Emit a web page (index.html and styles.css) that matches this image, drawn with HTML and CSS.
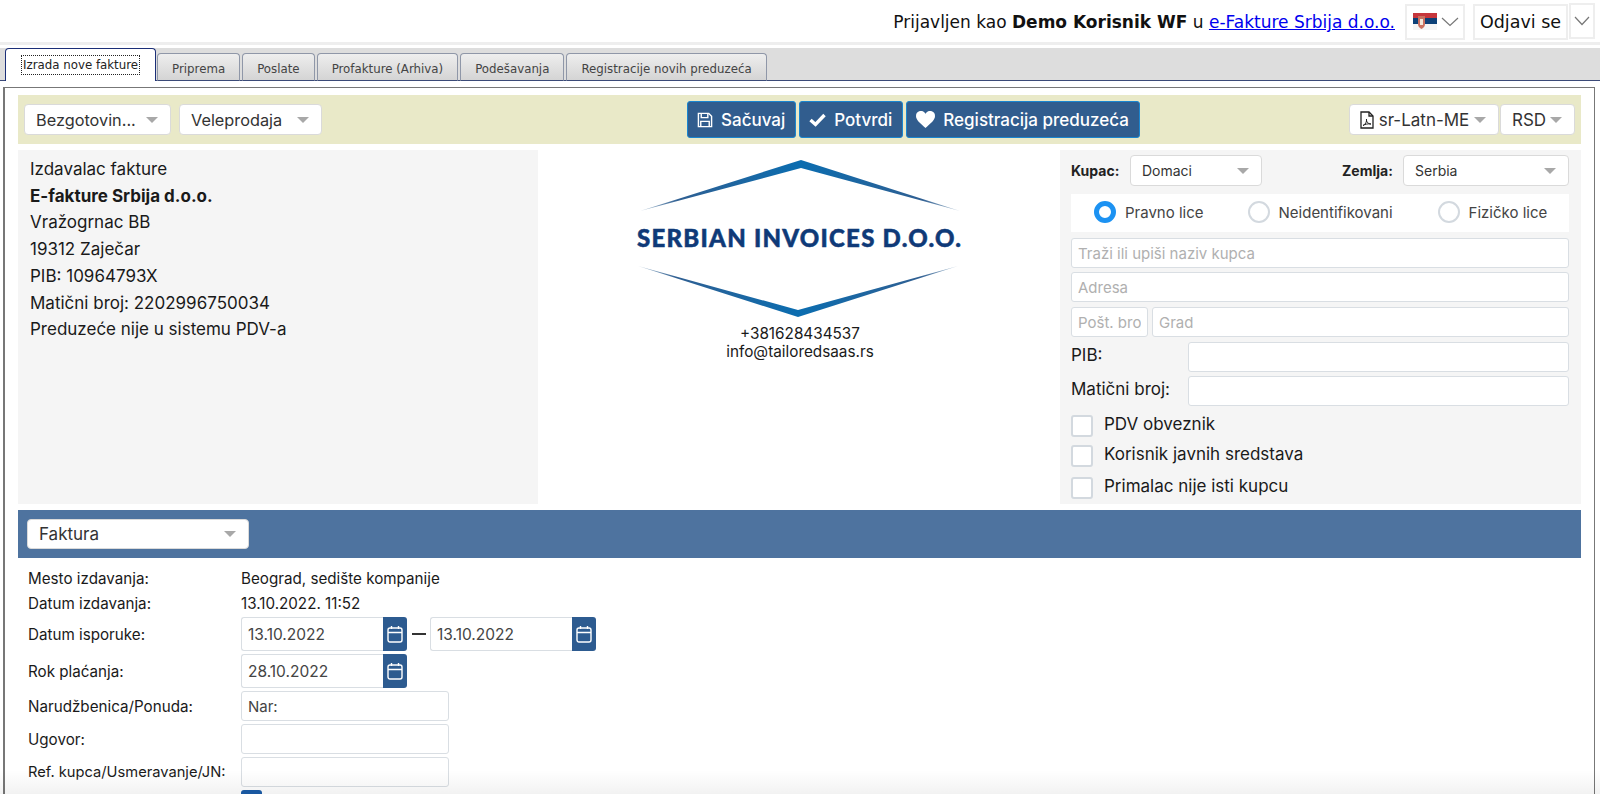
FILE: index.html
```html
<!DOCTYPE html>
<html lang="sr">
<head>
    <meta charset="UTF-8">
    <link rel="stylesheet" href="styles.css">
    <title>Izrada nove fakture</title>
</head>
<body>
    <header class="topbar">
        <span class="login">Prijavljen kao <b>Demo Korisnik WF</b> u <a href="#">e-Fakture Srbija d.o.o.</a></span>
        <div class="flagbox">
            <svg width="24" height="18" viewBox="0 0 24 18">
                <rect y="0" width="24" height="5" fill="#c6363c"/>
                <rect y="5" width="24" height="6" fill="#0c4077"/>
                <rect y="11" width="24" height="6" fill="#f4f4f4"/>
                <path d="M5 3h7v8c0 3-2 4-3.500 5C7 15 5 14 5 11z" fill="#c9705f"/>
                <path d="M7 6h3v6H7z" fill="#f2e6d8"/>
            </svg>
            <svg class="chev" width="18" height="10" viewBox="0 0 18 10"><path d="M1 1l8 7.500L17 1" fill="none" stroke="#777" stroke-width="1.200"/></svg>
        </div>
        <div class="logout">Odjavi se</div>
        <div class="logoutarrow">
            <svg width="16" height="10" viewBox="0 0 16 10"><path d="M1 1l7 7.500L15 1" fill="none" stroke="#777" stroke-width="1.200"/></svg>
        </div>
    </header>

    <nav class="tabs">
        <a class="tab active"><span>Izrada nove fakture</span></a>
        <a class="tab">Priprema</a>
        <a class="tab">Poslate</a>
        <a class="tab">Profakture (Arhiva)</a>
        <a class="tab">Podešavanja</a>
        <a class="tab">Registracije novih preduzeća</a>
    </nav>

    <main class="panel">
        <div class="toolbar">
            <div class="toolgroup">
                <div class="sel sel-pay">Bezgotovin...<i class="caret"></i></div>
                <div class="sel sel-sale">Veleprodaja<i class="caret"></i></div>
            </div>
            <div class="toolgroup actions">
                <button class="btn">
                    <svg width="16" height="16" viewBox="0 0 17 17" fill="none" stroke="#fff" stroke-width="1.500"><path d="M1.500 1.500h11l3 3v11h-14z"/><path d="M4.500 1.500v4.500h7V1.500"/><path d="M4 15.500v-5.500h9v5.500"/></svg>
                    Sačuvaj
                </button>
                <button class="btn">
                    <svg width="17" height="14" viewBox="0 0 17 14" fill="none" stroke="#fff" stroke-width="3.400"><path d="M1.500 7l5 4.500L15.500 2"/></svg>
                    Potvrdi
                </button>
                <button class="btn">
                    <svg width="19" height="17" viewBox="0 0 19 17" fill="#fff"><path d="M9.500 17C4 12 0 9 0 5a5 5 0 0 1 9.500-2.200A5 5 0 0 1 19 5c0 4-4 7-9.500 12z"/></svg>
                    Registracija preduzeća
                </button>
            </div>
            <div class="toolgroup right">
                <div class="sel sel-lang">
                    <svg width="14" height="18" viewBox="0 0 14 18" fill="none" stroke="#222" stroke-width="1.300"><path d="M1 1h8l4 4v12H1z"/><path d="M9 1v4h4"/><path d="M3 14.500c2.500-1 4-4 3.500-6.500-.5 3 2 5 4.500 5-3-.5-6 .2-8 1.500z" stroke-width="1"/></svg>
                    sr-Latn-ME<i class="caret"></i>
                </div>
                <div class="sel sel-cur">RSD<i class="caret"></i></div>
            </div>
        </div>

        <section class="info">
            <div class="issuer">
                <div>Izdavalac fakture</div>
                <div><b>E-fakture Srbija d.o.o.</b></div>
                <div>Vražogrnac BB</div>
                <div>19312 Zaječar</div>
                <div>PIB: 10964793X</div>
                <div>Matični broj: 2202996750034</div>
                <div>Preduzeće nije u sistemu PDV-a</div>
            </div>

            <div class="logo">
                <svg width="330" height="160" viewBox="0 0 330 160">
                    <defs>
                        <linearGradient id="lg1" x1="0" x2="1" y1="0" y2="0">
                            <stop offset="0" stop-color="#b8cad9"/>
                            <stop offset="0.120" stop-color="#2f5f92"/>
                            <stop offset="0.500" stop-color="#0b6db0"/>
                            <stop offset="0.880" stop-color="#2f5f92"/>
                            <stop offset="1" stop-color="#b8cad9"/>
                        </linearGradient>
                    </defs>
                    <polygon points="5,51 166,0 325,51 166,8" fill="url(#lg1)"/>
                    <polygon points="3,106 163,150 323,106 163,157" fill="url(#lg1)"/>
                    <text class="logotext" x="2" y="87" textLength="324" lengthAdjust="spacing">SERBIAN INVOICES D.O.O.</text>
                </svg>
                <div class="contact">+381628434537<br>info@tailoredsaas.rs</div>
            </div>

            <div class="buyer">
                <div class="buyer-top">
                    <label>Kupac:</label>
                    <div class="sel sel-small sel-kupac">Domaci<i class="caret"></i></div>
                    <label class="zemlja">Zemlja:</label>
                    <div class="sel sel-small sel-zemlja">Serbia<i class="caret"></i></div>
                </div>
                <div class="radios">
                    <span class="radio on"></span><span class="radio-lbl lbl1">Pravno lice</span>
                    <span class="radio"></span><span class="radio-lbl lbl2">Neidentifikovani</span>
                    <span class="radio"></span><span class="radio-lbl">Fizičko lice</span>
                </div>
                <input class="inp inp-first" placeholder="Traži ili upiši naziv kupca">
                <input class="inp" placeholder="Adresa">
                <div class="cityrow">
                    <input class="inp" placeholder="Pošt. broj">
                    <input class="inp" placeholder="Grad">
                </div>
                <div class="idrow"><label>PIB:</label><input class="inp"></div>
                <div class="idrow"><label>Matični broj:</label><input class="inp"></div>
                <div class="check check1"><span class="box"></span><span class="check-lbl">PDV obveznik</span></div>
                <div class="check check2"><span class="box"></span><span class="check-lbl">Korisnik javnih sredstava</span></div>
                <div class="check check3"><span class="box"></span><span class="check-lbl">Primalac nije isti kupcu</span></div>
            </div>
        </section>

        <div class="bluebar">
            <div class="sel sel-doc">Faktura<i class="caret"></i></div>
        </div>

        <section class="form">
            <div class="row row-text1"><label>Mesto izdavanja:</label><span>Beograd, sedište kompanije</span></div>
            <div class="row row-text2"><label>Datum izdavanja:</label><span>13.10.2022. 11:52</span></div>
            <div class="row">
                <label>Datum isporuke:</label>
                <div class="date"><input class="dateinp" value="13.10.2022"><span class="calbtn"><svg class="cal" width="16" height="18" viewBox="0 0 16 18" fill="none" stroke="#fff" stroke-width="1.400"><rect x="1" y="3" width="14" height="14" rx="2"/><path d="M1 7.500h14M4.500 1v3M11.500 1v3"/></svg></span></div>
                <span class="dash"></span>
                <div class="date"><input class="dateinp" value="13.10.2022"><span class="calbtn"><svg class="cal" width="16" height="18" viewBox="0 0 16 18" fill="none" stroke="#fff" stroke-width="1.400"><rect x="1" y="3" width="14" height="14" rx="2"/><path d="M1 7.500h14M4.500 1v3M11.500 1v3"/></svg></span></div>
            </div>
            <div class="row">
                <label>Rok plaćanja:</label>
                <div class="date"><input class="dateinp" value="28.10.2022"><span class="calbtn"><svg class="cal" width="16" height="18" viewBox="0 0 16 18" fill="none" stroke="#fff" stroke-width="1.400"><rect x="1" y="3" width="14" height="14" rx="2"/><path d="M1 7.500h14M4.500 1v3M11.500 1v3"/></svg></span></div>
            </div>
            <div class="row"><label>Narudžbenica/Ponuda:</label><input class="inp forminp" value="Nar:"></div>
            <div class="row"><label>Ugovor:</label><input class="inp forminp"></div>
            <div class="row"><label class="lbl-ref">Ref. kupca/Usmeravanje/JN:</label><input class="inp forminp"></div>
            <div class="row"><label></label><span class="checked"></span></div>
        </section>
    </main>
    <div class="fade"></div>
</body>
</html>
```

FILE: styles.css
```css
*{
    box-sizing: border-box;
}
html, body{
    margin: 0;
    height: 794px;
    overflow: hidden;
    background-color: white;
    color: #222;
    font-family: Inter, "Liberation Sans", sans-serif;
}

/* top line */
.topbar{
    height: 45px;
    padding-right: 5px;
    display: flex;
    justify-content: flex-end;
    align-items: flex-start;
    border-bottom: 3px solid #eeeeee;
    font-family: "DejaVu Sans", sans-serif;
    font-size: 17px;
    color: #111;
}
.login{
    margin-top: 12px;
    margin-right: 10px;
}
.login a{
    color: #0000ee;
}
.flagbox{
    width: 60px;
    height: 36px;
    margin-top: 4px;
    margin-right: 8px;
    border: 2px solid #eeeeee;
    display: flex;
    align-items: center;
    padding-left: 6px;
    gap: 4px;
}
.logout{
    width: 95px;
    height: 36px;
    margin-top: 4px;
    border: 2px solid #eeeeee;
    text-align: center;
    font-size: 17.500px;
    line-height: 32px;
}
.logoutarrow{
    width: 26px;
    height: 36px;
    margin-top: 3px;
    margin-left: 1px;
    border: 2px solid #eeeeee;
    display: flex;
    align-items: center;
    justify-content: center;
}

/* tabs */
.tabs{
    height: 33px;
    margin-top: 3px;
    padding-left: 5px;
    display: flex;
    align-items: flex-end;
    gap: 2px;
    background-color: #dddddd;
    border-bottom: 1px solid #3b4a78;
    font-family: "DejaVu Sans", sans-serif;
    font-size: 11.800px;
    color: #444;
}
.tab{
    height: 28px;
    padding: 3px 14px 0 14px;
    margin-bottom: -1px;
    display: flex;
    align-items: center;
    background: linear-gradient(#eeeeee, #d4d4d4);
    border: 1px solid #8f97a8;
    border-bottom-color: #3b4a78;
    border-radius: 4px 4px 0 0;
}
.tab.active{
    height: 33px;
    margin-right: -1px;
    padding: 0 16px;
    background: white;
    border: 1px solid #1c2f78;
    border-bottom: none;
    color: #222;
}
.tab.active span{
    outline: 1px dotted #222;
    padding: 2px 1px;
}

/* main panel */
.panel{
    width: 1592px;
    height: 720px;
    margin: 6px 0 0 3px;
    padding: 7px 13px 0 13px;
    border: 1px solid #777;
    border-left-width: 2px;
    border-bottom: none;
}
.toolbar{
    height: 49px;
    display: grid;
    grid-template-columns: 669px auto 1fr;
    align-items: center;
    background-color: #e9e9c8;
}
.toolgroup{
    display: flex;
    align-items: center;
    gap: 8px;
    padding-left: 6px;
}
.toolgroup.actions{
    gap: 3px;
    padding-left: 0;
}
.toolgroup.right{
    justify-content: flex-end;
    gap: 1px;
    padding-right: 6px;
}

.sel{
    height: 31px;
    padding: 0 12px 0 11px;
    display: flex;
    align-items: center;
    justify-content: space-between;
    background-color: white;
    border: 1px solid #dadada;
    border-radius: 4px;
    font-size: 16.300px;
    color: #333;
}
.caret{
    width: 0;
    height: 0;
    border-left: 6px solid transparent;
    border-right: 6px solid transparent;
    border-top: 6px solid #a8a8a8;
}
.sel-pay{
    width: 147px;
}
.sel-sale{
    width: 143px;
}
.sel-lang{
    width: 150px;
    padding-left: 10px;
    gap: 4px;
    font-size: 17px;
}
.sel-cur{
    width: 75px;
    font-size: 17px;
}
.sel-small{
    font-size: 14px;
}

.btn{
    height: 37px;
    padding: 0 10px 0 9px;
    display: flex;
    align-items: center;
    gap: 8px;
    background-color: #315d8e;
    border: 1px solid #1a86d0;
    border-radius: 3px;
    color: white;
    font-family: Inter, sans-serif;
    font-size: 17px;
    font-weight: 500;
}

/* issuer, logo, buyer */
.info{
    height: 354px;
    margin-top: 6px;
    display: grid;
    grid-template-columns: 520px 522px 1fr;
}
.issuer{
    padding: 6px 12px;
    background-color: #f5f5f5;
    font-size: 17px;
    line-height: 26.700px;
    color: #1a1a1a;
}
.logo{
    padding-top: 10px;
    padding-left: 97px;
}
.logo svg{
    display: block;
}
.logotext{
    font-family: Lato, sans-serif;
    font-weight: 900;
    font-size: 24px;
    fill: #0f3a78;
    stroke: #0f3a78;
    stroke-width: 0.500px;
}
.contact{
    width: 330px;
    margin-top: 5px;
    text-align: center;
    font-size: 15.300px;
    line-height: 18px;
    color: #1a1a1a;
}
.buyer{
    padding: 5px 12px 0 11px;
    display: flex;
    flex-direction: column;
    background-color: #f5f5f5;
}
.buyer-top{
    display: flex;
    align-items: center;
    font-size: 14px;
    font-weight: 700;
}
.buyer-top label{
    width: 59px;
}
.buyer-top .zemlja{
    margin-left: auto;
    width: 61px;
}
.sel-kupac{
    width: 132px;
    font-weight: 400;
}
.sel-zemlja{
    width: 166px;
    font-weight: 400;
}
.radios{
    height: 38px;
    margin-top: 8px;
    padding: 0 0 2px 23px;
    display: flex;
    align-items: center;
    background-color: white;
    font-size: 15px;
    color: #444;
}
.radio{
    width: 22px;
    height: 22px;
    border: 2px solid #d3d9df;
    border-radius: 50%;
    background-color: white;
}
.radio.on{
    border: 5px solid #1c92f2;
}
.radio-lbl{
    margin-left: 9px;
}
.lbl1{
    margin-right: 44px;
}
.lbl2{
    margin-right: 45px;
}
.inp{
    display: block;
    width: 100%;
    height: 30px;
    padding: 0 6px;
    background-color: white;
    border: 1px solid #d9dee3;
    border-radius: 3px;
    font-family: Inter, sans-serif;
    font-size: 15px;
    color: #444;
    outline: none;
}
.inp::placeholder{
    color: #b0b0b0;
}
.buyer > .inp, .cityrow, .idrow{
    margin-top: 4px;
    flex: none;
}
.buyer > .inp-first{
    margin-top: 6px;
}
.cityrow{
    margin-top: 5px;
    display: grid;
    grid-template-columns: 77px 1fr;
    gap: 4px;
}
.idrow{
    display: grid;
    grid-template-columns: 117px 1fr;
    align-items: center;
    font-size: 17px;
    color: #1a1a1a;
}
.idrow label{
    padding-bottom: 4px;
}
.cityrow + .idrow{
    margin-top: 5px;
}
.check{
    display: flex;
    align-items: center;
    gap: 11px;
    color: #1a1a1a;
}
.check-lbl{
    padding-bottom: 4px;
    font-size: 17px;
    line-height: 1;
}
.box{
    width: 22px;
    height: 22px;
    background-color: white;
    border: 2px solid #d3d9df;
    border-radius: 3px;
}
.check1{
    margin-top: 9px;
}
.check2{
    margin-top: 8px;
}
.check3{
    margin-top: 10px;
}

/* document bar and form */
.bluebar{
    height: 48px;
    margin-top: 6px;
    padding: 9px 0 0 9px;
    background-color: #4e739f;
}
.sel-doc{
    width: 222px;
    height: 30px;
    font-size: 17px;
}
.form{
    padding: 8px 0 0 10px;
    display: flex;
    flex-direction: column;
    gap: 3px;
    font-size: 15.200px;
    color: #1a1a1a;
}
.row{
    display: flex;
    align-items: center;
}
.row label{
    width: 213px;
}
.row .lbl-ref{
    font-size: 14.700px;
}
.row-text1{
    height: 24px;
}
.row-text2{
    height: 21px;
}
.date{
    width: 166px;
    height: 34px;
    display: flex;
}
.dateinp{
    width: 142px;
    height: 34px;
    padding: 0 6px;
    background-color: white;
    border: 1px solid #d9dee3;
    border-right: none;
    border-radius: 3px 0 0 3px;
    font-family: Inter, sans-serif;
    font-size: 15.500px;
    color: #444;
}
.calbtn{
    width: 24px;
    height: 34px;
    display: flex;
    align-items: center;
    justify-content: center;
    background-color: #2d5b90;
    border-radius: 0 3px 3px 0;
}
.dash{
    width: 14px;
    height: 2px;
    margin: 0 4px 0 5px;
    background-color: #333;
}
.forminp{
    width: 208px;
}
.checked{
    width: 21px;
    height: 21px;
    background-color: #1a5ca8;
    border-radius: 3px;
}
.fade{
    position: absolute;
    left: 0;
    right: 0;
    top: 770px;
    height: 24px;
    background: linear-gradient(rgba(0,0,0,0), rgba(0,0,0,0.05));
    pointer-events: none;
}
```
